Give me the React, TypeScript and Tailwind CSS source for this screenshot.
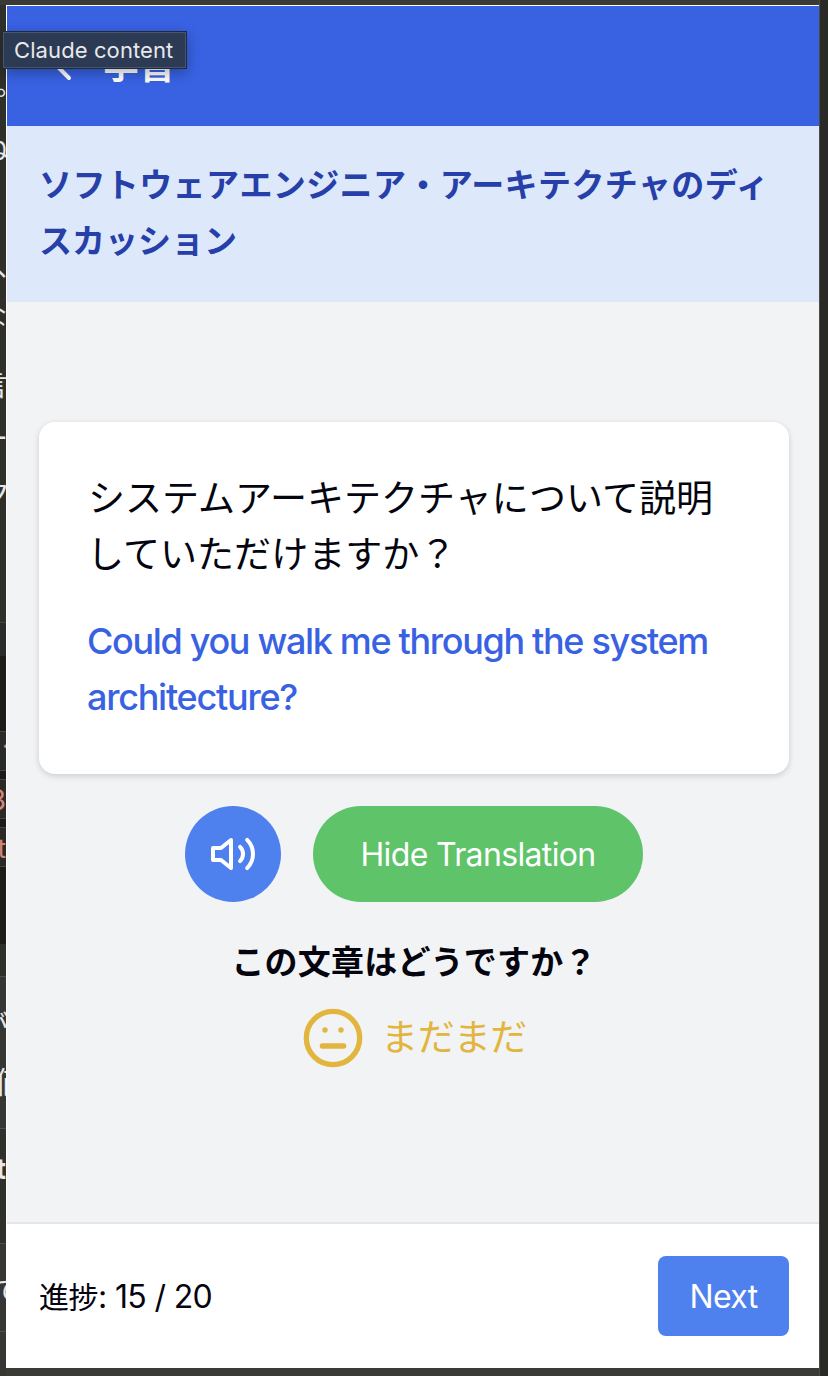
import React from "react";

type Fragment = { text: string; top: string; look: string };

const fragments: Fragment[] = [
  { text: "。", top: "top-[73px]", look: "-left-[4px] text-[26px] text-gray-200" },
  { text: "ね", top: "top-[136px]", look: "-left-[19px] text-[28px] text-gray-200" },
  { text: "、", top: "top-[252px]", look: "-left-[4px] text-[28px] text-gray-200" },
  { text: "な", top: "top-[304px]", look: "-left-[19px] text-[26px] text-gray-200" },
  { text: "言", top: "top-[372px]", look: "-left-[20px] text-[28px] text-gray-200" },
  { text: "ー", top: "top-[425px]", look: "-left-[20px] text-[28px] text-gray-200" },
  { text: "ク", top: "top-[480px]", look: "-left-[18px] text-[28px] text-gray-200" },
  { text: ".", top: "top-[726px]", look: "left-[2px] text-[26px] text-[#d4847c]" },
  { text: "3", top: "top-[786px]", look: "right-0 text-[28px] text-[#d4847c]" },
  { text: "t", top: "top-[836px]", look: "right-0 text-[26px] text-[#d4847c]" },
  { text: "が", top: "top-[1012px]", look: "-left-[20px] text-[28px] text-gray-200" },
  { text: "価", top: "top-[1067px]", look: "-left-[5px] text-[30px] text-gray-200" },
  { text: "t", top: "top-[1155px]", look: "right-0 text-[28px] font-bold text-gray-200" },
  { text: "で", top: "top-[1277px]", look: "-left-[7px] text-[28px] text-gray-200" },
];

function EditorEdge() {
  return (
    <div className="relative w-[6px] shrink-0 overflow-hidden bg-[#30302b]">
      <div className="absolute top-0 h-[5px] w-full bg-[#3a3a37]" />
      <div className="absolute top-[622px] h-[34px] w-full border-t border-[#464643] bg-[#2b2b28]" />
      <div className="absolute top-[656px] h-[288px] w-full bg-[#1d1c17]" />
      <div className="absolute top-[731px] h-[40px] w-full border-y border-[#464643] bg-[#2a2a26]" />
      <div className="absolute top-[779px] h-[40px] w-full border-y border-[#464643] bg-[#2a2a26]" />
      <div className="absolute top-[827px] h-[40px] w-full border-y border-[#464643] bg-[#2a2a26]" />
      <div className="absolute top-[976px] h-[153px] w-full border-y border-[#50504d] bg-[#363632]" />
      <div className="absolute top-[1243px] h-[89px] w-full border-y border-[#50504d] bg-[#363632]" />
      <div className="absolute top-[1332px] h-[44px] w-full bg-[#363632]" />
      {fragments.map((f) => (
        <span key={f.top} className={`absolute leading-none ${f.top} ${f.look}`}>
          {f.text}
        </span>
      ))}
    </div>
  );
}

function ChevronLeft() {
  return (
    <svg className="size-12" viewBox="0 0 24 24" fill="none" stroke="currentColor" strokeWidth="2" strokeLinecap="round" strokeLinejoin="round">
      <path d="m15 18-6-6 6-6" />
    </svg>
  );
}

function Volume() {
  return (
    <svg className="size-12" viewBox="0 0 24 24" fill="none" stroke="currentColor" strokeWidth="2" strokeLinecap="round" strokeLinejoin="round">
      <polygon points="11 5 6 9 2 9 2 15 6 15 11 19 11 5" />
      <path d="M15.54 8.46a5 5 0 0 1 0 7.07" />
      <path d="M19.07 4.93a10 10 0 0 1 0 14.14" />
    </svg>
  );
}

function Meh() {
  return (
    <svg className="size-16" viewBox="0 0 24 24" fill="none" stroke="currentColor" strokeWidth="2" strokeLinecap="round" strokeLinejoin="round">
      <circle cx="12" cy="12" r="10" />
      <line x1="8" x2="16" y1="15" y2="15" />
      <line x1="9" x2="9.01" y1="9" y2="9" />
      <line x1="15" x2="15.01" y1="9" y2="9" />
    </svg>
  );
}

export default function App() {
  return (
    <div className="relative flex h-[1376px] w-[828px] overflow-hidden bg-[#3a3a37] font-['Inter','Noto_Sans_CJK_JP',sans-serif] text-[#05050f]">
      <EditorEdge />
      <div className="mt-[5px] flex h-[1363px] w-[813px] flex-col border-t border-l border-white bg-[#f2f3f5]">
        <header className="flex h-[120px] shrink-0 items-center gap-4 bg-[#3962e3] px-8 text-white">
          <ChevronLeft />
          <h1 className="text-[36px] leading-[56px] font-bold">学習</h1>
        </header>
        <section className="h-[176px] shrink-0 bg-[#dde8fa] px-8 pt-[31px] text-[33px] leading-[56px] font-bold whitespace-nowrap text-[#263fa9]">
          <div className="tracking-[0.4px]">ソフトウェアエンジニア・アーキテクチャのディ</div>
          <div>スカッション</div>
        </section>
        <main className="flex h-[920px] shrink-0 flex-col items-center pt-[120px] pr-[30px] pl-8">
          <div className="h-[352px] w-[750px] shrink-0 rounded-2xl bg-white px-12 pt-[49px] text-[36px] leading-[56px] whitespace-nowrap shadow-[0_2px_6px_rgba(0,0,0,0.16)]">
            <p className="pl-px text-[37px] tracking-[0.05px]">システムアーキテクチャについて説明</p>
            <p className="text-[37px] tracking-[0.05px]">していただけますか？</p>
            <p className="mt-[30px] font-[450] tracking-[-1.33px] text-[#3962e3]">Could you walk me through the system</p>
            <p className="font-[450] tracking-[-1.25px] text-[#3962e3]">architecture?</p>
          </div>
          <div className="mt-8 flex gap-8">
            <button className="flex size-24 items-center justify-center rounded-full bg-[#4e81ee] text-white">
              <Volume />
            </button>
            <button className="h-24 w-[330px] rounded-full bg-[#5fc36a] pt-0.5 text-[32px] tracking-[-0.65px] whitespace-nowrap text-white">Hide Translation</button>
          </div>
          <p className="mt-8 text-[33px] leading-[56px] font-bold tracking-[0.2px] whitespace-nowrap">この文章はどうですか？</p>
          <div className="mt-4 flex items-center gap-4 text-[#e2b53e]">
            <Meh />
            <span className="text-[37px] leading-[56px] tracking-[-0.3px]">まだまだ</span>
          </div>
        </main>
        <footer className="flex h-[146px] shrink-0 items-center justify-between border-t-2 border-[#e4e6ea] bg-white pr-[30px] pl-8">
          <span className="pt-0.5 text-[32px] tracking-[-0.65px] whitespace-nowrap">
            <span className="text-[30px] tracking-[-0.5px]">進捗</span>: 15 / 20
          </span>
          <button className="h-20 w-[131px] rounded-lg bg-[#4e81ee] pt-0.5 text-[32px] tracking-[-0.6px] text-white">Next</button>
        </footer>
      </div>
      <div className="w-px shrink-0 bg-[#4b4b48]" />
      <div className="flex-1 bg-[#292925]" />
      <div className="absolute top-[31px] left-[2px] flex h-[38px] w-[185px] items-center border border-[#1e293f] bg-[#2c3a53] pl-[11px] text-[22px] tracking-[0.1px] whitespace-nowrap text-[#e7e9ec] shadow-[inset_0_0_0_1px_#47566b,0_4px_14px_rgba(0,0,0,0.3)]">
        Claude content
      </div>
    </div>
  );
}
